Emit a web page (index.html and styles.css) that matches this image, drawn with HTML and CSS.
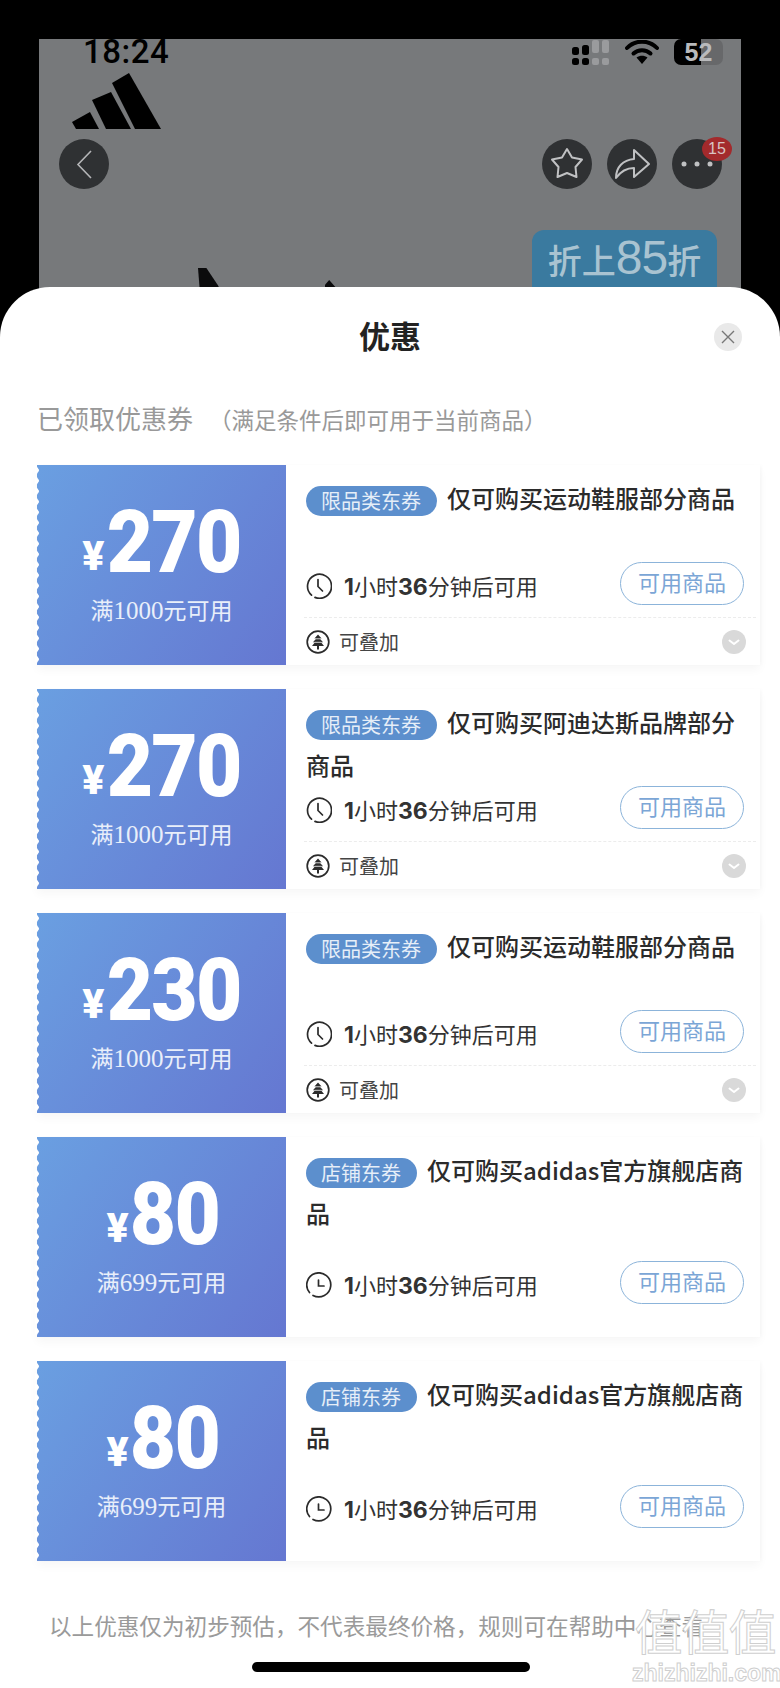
FILE: index.html
```html
<!DOCTYPE html>
<html lang="zh-CN">
<head>
  <meta charset="UTF-8">
  <meta name="viewport" content="width=device-width, initial-scale=1.0">
  <title>优惠</title>
  <link rel="stylesheet" href="styles.css">
</head>
<body>
  <svg class="sprites" width="0" height="0">
    <symbol id="clock-a" viewBox="0 0 26 26">
      <path d="M5.500 22.200A12 12 0 1 1 9 24.400" fill="none" stroke="#2b2b2b" stroke-width="1.700" stroke-linecap="round"/>
      <path d="M12 6.500V13.500L16.500 18" fill="none" stroke="#2b2b2b" stroke-width="1.700" stroke-linecap="round"/>
    </symbol>
    <symbol id="clock-b" viewBox="0 0 26 26">
      <path d="M3.500 20.500A12 12 0 1 1 7 23.400" fill="none" stroke="#2b2b2b" stroke-width="1.700" stroke-linecap="round"/>
      <path d="M12.500 8V14H18" fill="none" stroke="#2b2b2b" stroke-width="1.700" stroke-linecap="round"/>
    </symbol>
    <symbol id="tree" viewBox="0 0 24 24">
      <circle cx="12" cy="12" r="10.800" fill="none" stroke="#2b2b2b" stroke-width="1.700"/>
      <path d="M12 4.500 15.800 8.800H14L17 12.300H15L18 16H13V19.500H11V16H6L9 12.300H7L10 8.800H8.200Z" fill="#2b2b2b"/>
      <path d="M8.500 12.300H15.500M7.500 8.800H16.500" stroke="#fff" stroke-width="0.800"/>
    </symbol>
    <symbol id="chev" viewBox="0 0 24 24">
      <circle cx="12" cy="12" r="12" fill="#d9d9d9"/>
      <path d="M7.500 10.500 12 14 16.500 10.500" fill="none" stroke="#fff" stroke-width="2" stroke-linecap="round" stroke-linejoin="round"/>
    </symbol>
  </svg>

  <div class="stage">
    <div class="status">
      <span class="clock-time">18:24</span>
      <div class="status-icons">
        <svg width="38" height="25" viewBox="0 0 38 25">
          <rect x="20" y="0" width="7" height="13" rx="2" fill="#9a9b9d"/>
          <rect x="30" y="0" width="7" height="13" rx="2" fill="#9a9b9d"/>
          <rect x="20" y="18" width="7" height="7" rx="2" fill="#9a9b9d"/>
          <rect x="30" y="18" width="7" height="7" rx="2" fill="#9a9b9d"/>
          <rect x="0" y="7" width="7" height="8" rx="2.500" fill="#000"/>
          <rect x="10" y="5" width="7" height="10" rx="2.500" fill="#000"/>
          <rect x="0" y="18" width="7" height="7" rx="2.500" fill="#000"/>
          <rect x="10" y="18" width="7" height="7" rx="2.500" fill="#000"/>
        </svg>
        <svg class="wifi" width="34" height="24" viewBox="0 0 34 24">
          <path d="M2 8C10-.5 24-.5 32 8" fill="none" stroke="#000" stroke-width="4" stroke-linecap="round"/>
          <path d="M8.500 13.500C13 9 21 9 25.500 13.500" fill="none" stroke="#000" stroke-width="4" stroke-linecap="round"/>
          <path d="M11.500 17.500 17 24 22.500 17.500C19 15 15 15 11.500 17.500Z" fill="#000"/>
        </svg>
        <div class="battery"><span class="battery-num">52</span></div>
      </div>
    </div>
    <svg class="logo" width="90" height="57" viewBox="0 0 90 57">
      <path d="M0 49 18 39 27 56H4Z" fill="#000"/>
      <path d="M20 27 39 19 59 56H34Z" fill="#000"/>
      <path d="M40 10 57 0 89 56H63Z" fill="#000"/>
    </svg>
    <div class="nav">
      <div class="round-btn">
        <svg width="50" height="50" viewBox="0 0 50 50"><path d="M32 12 19 25.500 32 39" fill="none" stroke="#b5b6b8" stroke-width="1.600"/></svg>
      </div>
      <div class="nav-right">
        <div class="round-btn">
          <svg width="50" height="50" viewBox="0 0 50 50"><path d="M25 10 30 18.500 40 20.500 33.500 28 34.500 38 25 34 15.500 38 16.500 28 10 20.500 20 18.500Z" fill="none" stroke="#c0c1c3" stroke-width="2" stroke-linejoin="round"/></svg>
        </div>
        <div class="round-btn">
          <svg width="50" height="50" viewBox="0 0 50 50"><path d="M9 39C9 28 16 21 27 20V11L42 25 27 38V29C20 29 14 32 9 39Z" fill="none" stroke="#c0c1c3" stroke-width="2" stroke-linejoin="round"/></svg>
        </div>
        <div class="round-btn">
          <svg width="50" height="50" viewBox="0 0 50 50">
            <circle cx="12" cy="25" r="2.500" fill="#c0c1c3"/><circle cx="25" cy="25" r="2.500" fill="#c0c1c3"/><circle cx="38" cy="25" r="2.500" fill="#c0c1c3"/>
          </svg>
          <span class="badge">15</span>
        </div>
      </div>
    </div>
    <div class="promo">折上<b>85</b>折</div>
    <div class="shoe shoe-a"></div>
    <div class="shoe shoe-b"></div>
  </div>

  <div class="sheet">
    <div class="sheet-head">
      <h1>优惠</h1>
      <div class="close">
        <svg width="14" height="14" viewBox="0 0 14 14"><path d="M1 1 13 13M13 1 1 13" fill="none" stroke="#777" stroke-width="1.400"/></svg>
      </div>
    </div>
    <div class="section-title">已领取优惠券<small>（满足条件后即可用于当前商品）</small></div>

    <div class="coupon-list">
      <div class="coupon">
        <div class="ticket">
          <div class="amount"><span class="yen">¥</span><span class="num">270</span></div>
          <div class="cond">满<i>1000</i>元可用</div>
        </div>
        <div class="coupon-body">
          <div class="coupon-title"><span class="pill">限品类东券</span>仅可购买运动鞋服部分商品</div>
          <div class="coupon-row">
            <div class="time"><svg width="26" height="26"><use href="#clock-a"/></svg><span><b>1</b>小时<b>36</b>分钟后可用</span></div>
            <div class="use-btn">可用商品</div>
          </div>
          <div class="coupon-foot">
            <svg width="24" height="24"><use href="#tree"/></svg><span>可叠加</span>
            <svg class="chev" width="24" height="24"><use href="#chev"/></svg>
          </div>
        </div>
      </div>

      <div class="coupon">
        <div class="ticket">
          <div class="amount"><span class="yen">¥</span><span class="num">270</span></div>
          <div class="cond">满<i>1000</i>元可用</div>
        </div>
        <div class="coupon-body">
          <div class="coupon-title"><span class="pill">限品类东券</span>仅可购买阿迪达斯品牌部分商品</div>
          <div class="coupon-row">
            <div class="time"><svg width="26" height="26"><use href="#clock-a"/></svg><span><b>1</b>小时<b>36</b>分钟后可用</span></div>
            <div class="use-btn">可用商品</div>
          </div>
          <div class="coupon-foot">
            <svg width="24" height="24"><use href="#tree"/></svg><span>可叠加</span>
            <svg class="chev" width="24" height="24"><use href="#chev"/></svg>
          </div>
        </div>
      </div>

      <div class="coupon">
        <div class="ticket">
          <div class="amount"><span class="yen">¥</span><span class="num">230</span></div>
          <div class="cond">满<i>1000</i>元可用</div>
        </div>
        <div class="coupon-body">
          <div class="coupon-title"><span class="pill">限品类东券</span>仅可购买运动鞋服部分商品</div>
          <div class="coupon-row">
            <div class="time"><svg width="26" height="26"><use href="#clock-a"/></svg><span><b>1</b>小时<b>36</b>分钟后可用</span></div>
            <div class="use-btn">可用商品</div>
          </div>
          <div class="coupon-foot">
            <svg width="24" height="24"><use href="#tree"/></svg><span>可叠加</span>
            <svg class="chev" width="24" height="24"><use href="#chev"/></svg>
          </div>
        </div>
      </div>

      <div class="coupon coupon-plain">
        <div class="ticket">
          <div class="amount"><span class="yen">¥</span><span class="num">80</span></div>
          <div class="cond">满<i>699</i>元可用</div>
        </div>
        <div class="coupon-body">
          <div class="coupon-title"><span class="pill">店铺东券</span>仅可购买adidas官方旗舰店商品</div>
          <div class="coupon-row">
            <div class="time"><svg width="26" height="26"><use href="#clock-b"/></svg><span><b>1</b>小时<b>36</b>分钟后可用</span></div>
            <div class="use-btn">可用商品</div>
          </div>
        </div>
      </div>

      <div class="coupon coupon-plain">
        <div class="ticket">
          <div class="amount"><span class="yen">¥</span><span class="num">80</span></div>
          <div class="cond">满<i>699</i>元可用</div>
        </div>
        <div class="coupon-body">
          <div class="coupon-title"><span class="pill">店铺东券</span>仅可购买adidas官方旗舰店商品</div>
          <div class="coupon-row">
            <div class="time"><svg width="26" height="26"><use href="#clock-b"/></svg><span><b>1</b>小时<b>36</b>分钟后可用</span></div>
            <div class="use-btn">可用商品</div>
          </div>
        </div>
      </div>
    </div>

    <p class="note">以上优惠仅为初步预估，不代表最终价格，规则可在帮助中心查看</p>

    <div class="home-bar"></div>
    <div class="watermark">
      <div class="wm-mark">值值值</div>
      <div class="wm-site">zhizhizhi.com</div>
    </div>
  </div>
</body>
</html>
```

FILE: styles.css
```css
* {
  box-sizing: border-box;
}
html, body {
  margin: 0;
  height: 1688px;
  overflow: hidden;
}
body {
  background: #000;
  font-family: "Noto Sans CJK SC", "Noto Sans", sans-serif;
  color: #2b2b2b;
}
.sprites {
  position: absolute;
}

/* dimmed page behind the sheet */
.stage {
  position: relative;
  margin: 39px 39px 0;
  height: 298px;
  background: #77797b;
}
.status {
  height: 34px;
  display: flex;
  justify-content: space-between;
  padding: 0 18px 0 44px;
}
.clock-time {
  font-family: "Roboto", sans-serif;
  font-size: 33px;
  font-weight: 500;
  line-height: 26px;
  letter-spacing: 0.5px;
  color: #000;
}
.status-icons {
  display: flex;
  align-items: flex-start;
}
.status-icons > svg:first-child {
  margin-top: 1px;
}
.wifi {
  margin: 1px 15px 0;
}
.battery {
  width: 49px;
  height: 26px;
  border-radius: 7px;
  background: linear-gradient(to right, #000 55%, #67686a 55%);
  text-align: center;
}
.battery-num {
  font-family: "Liberation Sans", sans-serif;
  font-size: 25px;
  line-height: 27px;
  font-weight: 700;
  color: #b9babc;
}
.logo {
  display: block;
  margin-left: 33px;
}
.nav {
  display: flex;
  justify-content: space-between;
  margin-top: 9px;
  padding: 0 19px 0 20px;
}
.nav-right {
  display: flex;
  gap: 15px;
}
.round-btn {
  position: relative;
  width: 50px;
  height: 50px;
  border-radius: 50%;
  background: #2f3133;
}
.round-btn svg {
  display: block;
}
.badge {
  position: absolute;
  top: -2px;
  left: 30px;
  width: 30px;
  height: 24px;
  border-radius: 50%;
  background: #a32a2c;
  color: #d9c3c3;
  font-family: "Liberation Sans", sans-serif;
  font-size: 16px;
  line-height: 24px;
  text-align: center;
}
.promo {
  width: 185px;
  height: 100px;
  margin: 41px 0 0 493px;
  padding-top: 2px;
  border-radius: 12px;
  background: #3a7a9f;
  color: #a9c3d1;
  font-size: 34px;
  font-weight: 500;
  line-height: 52px;
  text-align: center;
  white-space: nowrap;
}
.promo b {
  font-family: "Liberation Sans", sans-serif;
  font-weight: 400;
  font-size: 48px;
  letter-spacing: -1px;
}
.shoe {
  position: absolute;
  background: #0b0b0c;
}
.shoe-a {
  left: 159px;
  top: 229px;
  width: 24px;
  height: 30px;
  clip-path: polygon(0 0, 35% 0, 85% 60%, 100% 100%, 10% 100%);
}
.shoe-b {
  left: 286px;
  top: 241px;
  width: 14px;
  height: 16px;
  clip-path: polygon(0 30%, 30% 0, 100% 70%, 100% 100%, 0 100%);
}

/* bottom sheet */
.sheet {
  position: relative;
  height: 1401px;
  margin-top: -50px;
  padding: 0 20px 0 37px;
  border-radius: 50px 50px 0 0;
  background: #fff;
  overflow: hidden;
}
.sheet-head {
  position: relative;
  height: 100px;
}
.sheet-head h1 {
  margin: 0 0 0 -37px;
  width: 780px;
  font-size: 31px;
  font-weight: 700;
  line-height: 96px;
  text-align: center;
  color: #222;
}
.close {
  position: absolute;
  top: 36px;
  left: 677px;
  width: 28px;
  height: 28px;
  border-radius: 50%;
  background: #e9e9e9;
  display: flex;
  align-items: center;
  justify-content: center;
}
.section-title {
  font-size: 26px;
  line-height: 34px;
  height: 34px;
  margin-top: 14px;
  color: #999;
}
.section-title small {
  font-size: 22.5px;
  margin-left: 16px;
}

/* coupons */
.coupon-list {
  display: flex;
  flex-direction: column;
  gap: 24px;
  margin-top: 30px;
}
.coupon {
  display: flex;
  height: 200px;
  background: #fff;
  box-shadow: 0 5px 9px rgba(0, 0, 0, 0.035), 2px 0 3px rgba(0, 0, 0, 0.02);
}
.ticket {
  position: relative;
  flex: none;
  width: 249px;
  padding-top: 42px;
  background: linear-gradient(125deg, #6a9fe1 0%, #6577d1 100%);
  color: #fff;
  text-align: center;
}
.ticket::before {
  content: "";
  position: absolute;
  left: -2px;
  top: 0;
  bottom: 0;
  width: 5px;
  background: radial-gradient(circle at 0 50%, #fff 3.5px, transparent 4px) 0 0 / 5px 10.5px repeat-y;
}
.amount {
  display: flex;
  justify-content: center;
  align-items: flex-end;
  height: 70px;
  padding-left: 6px;
}
.yen {
  font-family: "Roboto", sans-serif;
  font-weight: 900;
  font-size: 41px;
  line-height: 41px;
  margin-right: -3px;
}
.num {
  display: inline-block;
  font-family: "Roboto", sans-serif;
  font-weight: 900;
  font-size: 87px;
  line-height: 70px;
  letter-spacing: -2px;
  transform: scaleX(0.92);
  transform-origin: 50% 50%;
}
.cond {
  margin-top: 16px;
  font-size: 23px;
  line-height: 32px;
  color: #e9effa;
}
.cond i {
  font-family: "Liberation Serif", serif;
  font-style: normal;
  font-size: 25px;
}
.coupon-body {
  flex: 1;
  display: flex;
  flex-direction: column;
  min-width: 0;
  padding: 11px 16px 0 20px;
}
.coupon-title {
  height: 86px;
  font-size: 24px;
  font-weight: 500;
  line-height: 43px;
  color: #2b2b2b;
}
.pill {
  display: inline-block;
  height: 30px;
  margin-right: 10px;
  padding: 0 16px 0 15px;
  border-radius: 15px;
  background: #5c8fcd;
  color: #e6eef8;
  font-size: 20px;
  font-weight: 400;
  line-height: 29px;
  vertical-align: -1px;
}
.coupon-row {
  display: flex;
  align-items: center;
  justify-content: space-between;
  height: 43px;
  margin-top: auto;
}
.coupon-plain .coupon-row {
  margin-bottom: 33px;
}
.time {
  display: flex;
  align-items: center;
  gap: 12px;
  padding-top: 5px;
  font-size: 22px;
  line-height: 30px;
  color: #333;
}
.time svg {
  flex: none;
}
.time b {
  font-family: "Inter", sans-serif;
  font-size: 23px;
  font-weight: 700;
}
.use-btn {
  width: 124px;
  height: 43px;
  border: 1px solid #8cb4da;
  border-radius: 22px;
  color: #7ba6d6;
  font-size: 22px;
  line-height: 36px;
  text-align: center;
}
.coupon-foot {
  display: flex;
  align-items: center;
  gap: 9px;
  height: 48px;
  margin: 12px -12px 0 -2px;
  padding: 0 10px 0 2px;
  border-top: 1px dashed #ececec;
  font-size: 20px;
  color: #444;
}
.chev {
  margin-left: auto;
}
.note {
  margin: 49px 0 0 12px;
  font-size: 22.6px;
  line-height: 32px;
  white-space: nowrap;
  color: #9a9a9a;
}

/* things lying over the sheet */
.home-bar {
  position: absolute;
  left: 252px;
  top: 1375px;
  width: 278px;
  height: 10px;
  border-radius: 5px;
  background: #000;
}
.watermark {
  position: absolute;
  left: 632px;
  top: 1316px;
  width: 146px;
  text-align: center;
  color: #fff;
  -webkit-text-stroke: 1px #cfcfcf;
}
.wm-mark {
  font-size: 48px;
  font-weight: 400;
  line-height: 52px;
  letter-spacing: -1px;
  white-space: nowrap;
}
.wm-site {
  margin-top: 6px;
  font-family: "Liberation Sans", sans-serif;
  font-size: 23px;
  font-weight: 700;
  line-height: 24px;
  white-space: nowrap;
}
```
